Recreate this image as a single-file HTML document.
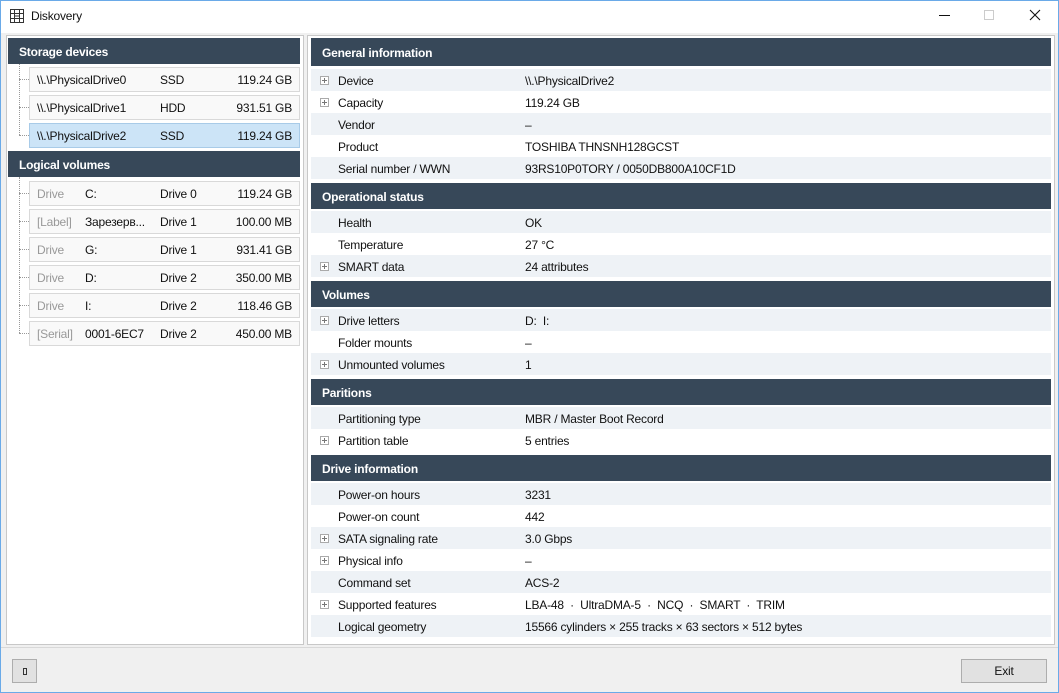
<!DOCTYPE html>
<html><head><meta charset="utf-8"><style>
*{margin:0;padding:0;box-sizing:border-box}
body{width:1059px;height:693px;overflow:hidden;background:#f0f0f0;font-family:"Segoe UI","Liberation Sans",sans-serif;font-size:12px;color:#111;position:relative;letter-spacing:-0.2px}
.a{position:absolute}
.win{left:0;top:0;width:1059px;height:693px;border:1px solid #6aaae8}
.title{left:1px;top:1px;width:1057px;height:32px;background:#fff}
.panel{background:#fff;border:1px solid #c8c8c8}
.hd{background:#374859;color:#fff;font-weight:bold;line-height:28px;padding-left:11px;font-size:12px}
.it{left:29px;width:271px;height:25px;border:1px solid #d9d9d9;background:#f9f9f9;line-height:24px}
.it span{position:absolute;top:0}
.sel{background:#cce4f7;border-color:#a8cbe8}
.g{color:#999}
.r{right:7px}
.row{left:311px;width:740px;height:22px;line-height:24px}
.sh{background:#eef2f6}
.row .l{position:absolute;left:27px}
.row .v{position:absolute;left:214px}
.pl{position:absolute;left:9px;top:7px;width:9px;height:9px;border:1px solid #aaa;background:#fff}
.pl:before{content:"";position:absolute;left:1px;top:3px;width:5px;height:1px;background:#777}
.pl:after{content:"";position:absolute;left:3px;top:1px;width:1px;height:5px;background:#777}
.dv{border-left:1px dotted #999}
.dh{border-top:1px dotted #999;height:1px;width:10px;left:19px}
.btn{border:1px solid #adadad;background:#e1e1e1;text-align:center;line-height:22px}
</style></head><body>
<div class="a win"></div>
<div class="a title"></div>
<svg class="a" style="left:9px;top:8px" width="16" height="16" viewBox="0 0 16 16" fill="none" stroke="#333" stroke-width="1"><rect x="1.5" y="1.5" width="13" height="13"/><path d="M1.5 5.5h13M1.5 10.5h13M5.5 1.5v13M10.5 1.5v13M5.5 8h5"/></svg>
<div class="a" style="left:31px;top:9px;font-size:12px">Diskovery</div>
<div class="a" style="left:939px;top:15px;width:11px;height:1px;background:#111"></div>
<div class="a" style="left:984px;top:10px;width:10px;height:10px;border:1px solid #ccc"></div>
<svg class="a" style="left:1029px;top:9px" width="12" height="12"><path d="M1 1L11 11M11 1L1 11" stroke="#111" stroke-width="1.1"/></svg>

<div class="a panel" style="left:6px;top:35px;width:298px;height:610px"></div>
<div class="a hd" style="left:8px;top:38px;width:292px;height:26px">Storage devices</div>
<div class="a dv" style="left:19px;top:64px;height:71px"></div>
<div class="a dh" style="top:79px"></div><div class="a dh" style="top:107px"></div><div class="a dh" style="top:135px"></div>
<div class="a it" style="top:67px"><span style="left:7px">\\.\PhysicalDrive0</span><span style="left:130px">SSD</span><span class="r">119.24 GB</span></div>
<div class="a it" style="top:95px"><span style="left:7px">\\.\PhysicalDrive1</span><span style="left:130px">HDD</span><span class="r">931.51 GB</span></div>
<div class="a it sel" style="top:123px"><span style="left:7px">\\.\PhysicalDrive2</span><span style="left:130px">SSD</span><span class="r">119.24 GB</span></div>
<div class="a hd" style="left:8px;top:151px;width:292px;height:26px">Logical volumes</div>
<div class="a dv" style="left:19px;top:177px;height:156px"></div>
<div class="a dh" style="top:193px"></div><div class="a dh" style="top:221px"></div><div class="a dh" style="top:249px"></div><div class="a dh" style="top:277px"></div><div class="a dh" style="top:305px"></div><div class="a dh" style="top:333px"></div>
<div class="a it" style="top:181px"><span class="g" style="left:7px">Drive</span><span style="left:55px">C:</span><span style="left:130px">Drive 0</span><span class="r">119.24 GB</span></div>
<div class="a it" style="top:209px"><span class="g" style="left:7px">[Label]</span><span style="left:55px">Зарезерв...</span><span style="left:130px">Drive 1</span><span class="r">100.00 MB</span></div>
<div class="a it" style="top:237px"><span class="g" style="left:7px">Drive</span><span style="left:55px">G:</span><span style="left:130px">Drive 1</span><span class="r">931.41 GB</span></div>
<div class="a it" style="top:265px"><span class="g" style="left:7px">Drive</span><span style="left:55px">D:</span><span style="left:130px">Drive 2</span><span class="r">350.00 MB</span></div>
<div class="a it" style="top:293px"><span class="g" style="left:7px">Drive</span><span style="left:55px">I:</span><span style="left:130px">Drive 2</span><span class="r">118.46 GB</span></div>
<div class="a it" style="top:321px"><span class="g" style="left:7px">[Serial]</span><span style="left:55px">0001-6EC7</span><span style="left:130px">Drive 2</span><span class="r">450.00 MB</span></div>

<div class="a panel" style="left:307px;top:35px;width:748px;height:610px"></div>
<div class="a hd" style="left:311px;top:38px;width:740px;height:28px;line-height:30px">General information</div>
<div class="a row sh" style="top:69px"><i class="pl"></i><span class="l">Device</span><span class="v">\\.\PhysicalDrive2</span></div>
<div class="a row" style="top:91px"><i class="pl"></i><span class="l">Capacity</span><span class="v">119.24 GB</span></div>
<div class="a row sh" style="top:113px"><span class="l">Vendor</span><span class="v">–</span></div>
<div class="a row" style="top:135px"><span class="l">Product</span><span class="v">TOSHIBA THNSNH128GCST</span></div>
<div class="a row sh" style="top:157px"><span class="l">Serial number / WWN</span><span class="v">93RS10P0TORY / 0050DB800A10CF1D</span></div>
<div class="a hd" style="left:311px;top:183px;width:740px;height:26px">Operational status</div>
<div class="a row sh" style="top:211px"><span class="l">Health</span><span class="v">OK</span></div>
<div class="a row" style="top:233px"><span class="l">Temperature</span><span class="v">27 °C</span></div>
<div class="a row sh" style="top:255px"><i class="pl"></i><span class="l">SMART data</span><span class="v">24 attributes</span></div>
<div class="a hd" style="left:311px;top:281px;width:740px;height:26px">Volumes</div>
<div class="a row sh" style="top:309px"><i class="pl"></i><span class="l">Drive letters</span><span class="v">D:&nbsp; I:</span></div>
<div class="a row" style="top:331px"><span class="l">Folder mounts</span><span class="v">–</span></div>
<div class="a row sh" style="top:353px"><i class="pl"></i><span class="l">Unmounted volumes</span><span class="v">1</span></div>
<div class="a hd" style="left:311px;top:379px;width:740px;height:26px">Paritions</div>
<div class="a row sh" style="top:407px"><span class="l">Partitioning type</span><span class="v">MBR / Master Boot Record</span></div>
<div class="a row" style="top:429px"><i class="pl"></i><span class="l">Partition table</span><span class="v">5 entries</span></div>
<div class="a hd" style="left:311px;top:455px;width:740px;height:26px">Drive information</div>
<div class="a row sh" style="top:483px"><span class="l">Power-on hours</span><span class="v">3231</span></div>
<div class="a row" style="top:505px"><span class="l">Power-on count</span><span class="v">442</span></div>
<div class="a row sh" style="top:527px"><i class="pl"></i><span class="l">SATA signaling rate</span><span class="v">3.0 Gbps</span></div>
<div class="a row" style="top:549px"><i class="pl"></i><span class="l">Physical info</span><span class="v">–</span></div>
<div class="a row sh" style="top:571px"><span class="l">Command set</span><span class="v">ACS-2</span></div>
<div class="a row" style="top:593px"><i class="pl"></i><span class="l">Supported features</span><span class="v">LBA-48 &nbsp;·&nbsp; UltraDMA-5 &nbsp;·&nbsp; NCQ &nbsp;·&nbsp; SMART &nbsp;·&nbsp; TRIM</span></div>
<div class="a row sh" style="top:615px"><span class="l">Logical geometry</span><span class="v">15566 cylinders × 255 tracks × 63 sectors × 512 bytes</span></div>

<div class="a" style="left:1px;top:647px;width:1057px;height:1px;background:#d8d8d8"></div>
<div class="a btn" style="left:12px;top:659px;width:25px;height:24px"><span style="display:inline-block;width:4px;height:7px;border:1px solid #333;vertical-align:middle"></span></div>
<div class="a btn" style="left:961px;top:659px;width:86px;height:24px;line-height:23px">Exit</div>
</body></html>
